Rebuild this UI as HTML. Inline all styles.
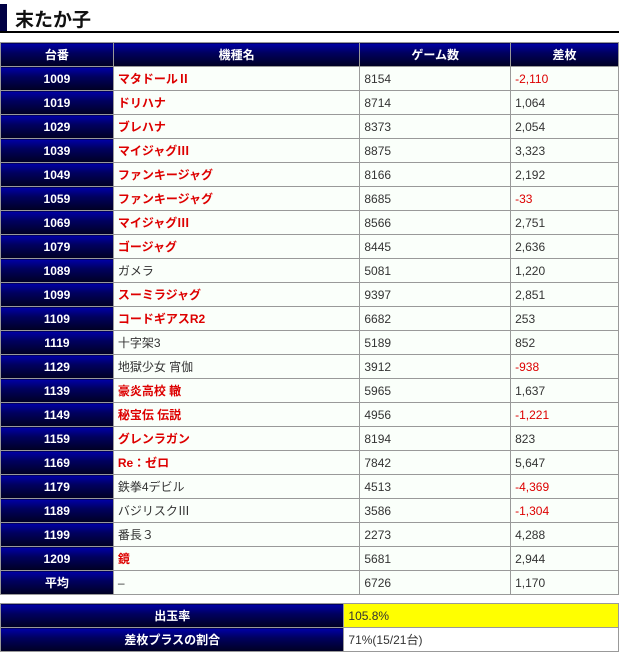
<!DOCTYPE html>
<html><head><meta charset="utf-8"><style>
body{margin:0;width:619px;height:652px;background:#fff;font-family:"Liberation Sans","Noto Sans CJK JP",sans-serif;overflow:hidden}
.t{position:absolute;left:0;top:0;width:619px;height:33px;border-bottom:2px solid #000;box-sizing:border-box}
.t .b{position:absolute;left:0;top:4px;width:7px;height:27px;background:#000044}
.t span{position:absolute;left:15px;top:5px;font-size:19px;font-weight:bold;color:#111}
table{position:absolute;left:0;border-collapse:collapse;width:619px;font-size:12px}
td,th{border:1px solid #999;height:24px;padding:0 0 0 4px;box-sizing:border-box}
th,td.h{background:linear-gradient(#0000a8,#000060 40%,#000022);color:#fff;font-weight:bold;text-align:center;padding:0}
td{color:#333;background:#fafffa}
.r{color:#d00}
.n{color:#d00;font-weight:bold}
</style></head><body>
<div class="t"><div class="b"></div><span>末たか子</span></div>
<table style="top:42px">
<colgroup><col style="width:113px"><col style="width:247px"><col style="width:151px"><col style="width:108px"></colgroup>
<tr><th>台番</th><th>機種名</th><th>ゲーム数</th><th>差枚</th></tr>
<tr><td class="h">1009</td><td class="n">マタドールⅡ</td><td>8154</td><td class="r">-2,110</td></tr>
<tr><td class="h">1019</td><td class="n">ドリハナ</td><td>8714</td><td>1,064</td></tr>
<tr><td class="h">1029</td><td class="n">ブレハナ</td><td>8373</td><td>2,054</td></tr>
<tr><td class="h">1039</td><td class="n">マイジャグⅢ</td><td>8875</td><td>3,323</td></tr>
<tr><td class="h">1049</td><td class="n">ファンキージャグ</td><td>8166</td><td>2,192</td></tr>
<tr><td class="h">1059</td><td class="n">ファンキージャグ</td><td>8685</td><td class="r">-33</td></tr>
<tr><td class="h">1069</td><td class="n">マイジャグⅢ</td><td>8566</td><td>2,751</td></tr>
<tr><td class="h">1079</td><td class="n">ゴージャグ</td><td>8445</td><td>2,636</td></tr>
<tr><td class="h">1089</td><td>ガメラ</td><td>5081</td><td>1,220</td></tr>
<tr><td class="h">1099</td><td class="n">スーミラジャグ</td><td>9397</td><td>2,851</td></tr>
<tr><td class="h">1109</td><td class="n">コードギアスR2</td><td>6682</td><td>253</td></tr>
<tr><td class="h">1119</td><td>十字架3</td><td>5189</td><td>852</td></tr>
<tr><td class="h">1129</td><td>地獄少女 宵伽</td><td>3912</td><td class="r">-938</td></tr>
<tr><td class="h">1139</td><td class="n">豪炎高校 轍</td><td>5965</td><td>1,637</td></tr>
<tr><td class="h">1149</td><td class="n">秘宝伝 伝説</td><td>4956</td><td class="r">-1,221</td></tr>
<tr><td class="h">1159</td><td class="n">グレンラガン</td><td>8194</td><td>823</td></tr>
<tr><td class="h">1169</td><td class="n">Re：ゼロ</td><td>7842</td><td>5,647</td></tr>
<tr><td class="h">1179</td><td>鉄拳4デビル</td><td>4513</td><td class="r">-4,369</td></tr>
<tr><td class="h">1189</td><td>バジリスクⅢ</td><td>3586</td><td class="r">-1,304</td></tr>
<tr><td class="h">1199</td><td>番長３</td><td>2273</td><td>4,288</td></tr>
<tr><td class="h">1209</td><td class="n">鏡</td><td>5681</td><td>2,944</td></tr>
<tr><td class="h">平均</td><td>–</td><td>6726</td><td>1,170</td></tr>
</table>
<table style="top:603px">
<colgroup><col style="width:344px"><col style="width:275px"></colgroup>
<tr><td class="h">出玉率</td><td style="background:#ffff00">105.8%</td></tr>
<tr><td class="h">差枚プラスの割合</td><td style="background:#fff">71%(15/21台)</td></tr>
</table>
</body></html>
